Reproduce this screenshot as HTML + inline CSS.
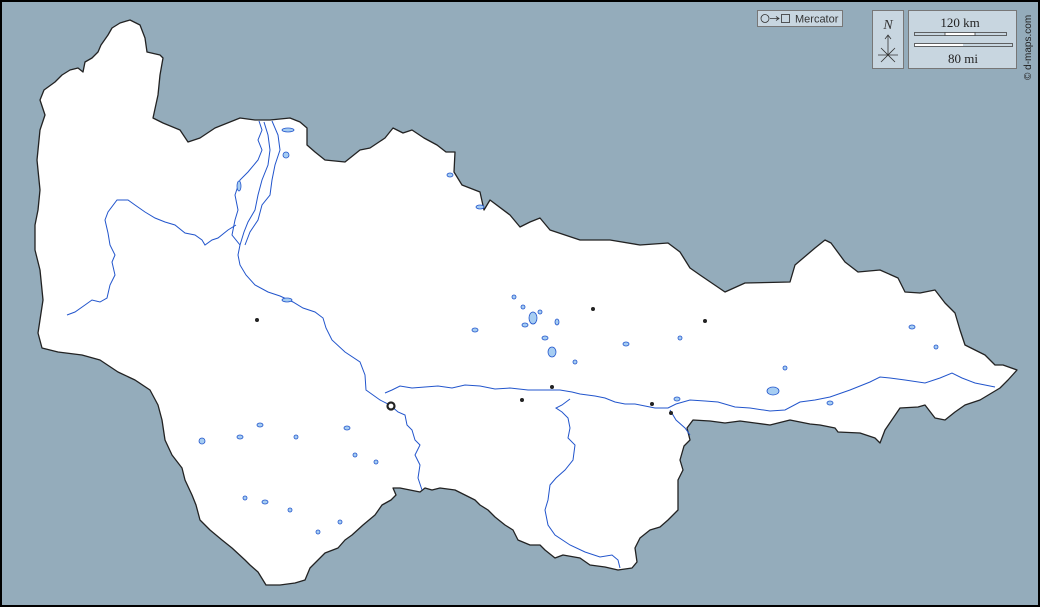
<!DOCTYPE html>
<html><head><meta charset="utf-8"><style>
html,body{margin:0;padding:0;background:#000}
#w{position:relative;width:1040px;height:607px;overflow:hidden}
svg{position:absolute;left:0;top:0}
.t{font-family:"Liberation Serif",serif}
</style></head><body><div id="w">
<svg width="1040" height="607" viewBox="0 0 1040 607">
<rect x="0" y="0" width="1040" height="607" fill="#000"/>
<rect x="2" y="2" width="1036" height="603" fill="#94acbb"/>
<path fill="#fff" stroke="#222" stroke-width="1.3" stroke-linejoin="round" d="M130,20 L140,25 L145,38 L147,52 L160,55 L163,58 L160,75 L158,95 L153,118 L163,123 L180,130 L188,142 L200,138 L215,128 L240,118 L255,120 L270,120 L290,118 L300,122 L307,128 L307,145 L315,152 L325,160 L345,162 L360,150 L370,148 L385,138 L393,128 L403,133 L412,130 L424,138 L437,145 L446,152 L455,152 L454,172 L462,185 L480,192 L484,210 L490,200 L510,215 L520,227 L530,222 L540,218 L550,230 L580,240 L610,240 L640,245 L668,243 L680,252 L690,268 L700,275 L725,292 L745,283 L790,282 L795,265 L815,248 L825,240 L831,243 L845,262 L858,272 L880,270 L898,278 L905,292 L920,293 L935,290 L945,303 L955,313 L960,330 L965,345 L985,355 L995,365 L1003,365 L1017,370 L1008,380 L1000,388 L980,400 L965,405 L955,412 L945,420 L935,418 L925,405 L918,407 L900,408 L885,430 L880,443 L875,438 L860,433 L838,432 L835,428 L820,425 L810,424 L790,420 L770,425 L755,423 L740,421 L725,423 L710,421 L693,420 L687,428 L690,440 L684,446 L680,460 L683,470 L678,480 L678,510 L668,520 L660,527 L650,530 L640,538 L635,548 L637,562 L632,568 L618,570 L605,567 L590,565 L580,558 L563,555 L555,558 L545,550 L540,545 L530,545 L518,540 L513,530 L505,525 L495,517 L488,510 L480,505 L475,500 L465,495 L455,490 L440,488 L432,490 L425,488 L420,492 L410,490 L400,488 L393,488 L396,495 L391,500 L382,505 L375,515 L363,525 L352,535 L345,540 L338,548 L325,553 L318,560 L310,568 L305,580 L295,583 L280,585 L266,585 L258,572 L250,565 L245,560 L232,548 L222,540 L210,530 L200,520 L196,505 L192,495 L185,480 L182,468 L172,455 L165,440 L162,420 L158,405 L150,390 L135,380 L118,372 L100,360 L82,355 L58,352 L42,348 L38,333 L43,300 L40,270 L35,250 L35,225 L38,210 L40,190 L37,160 L40,130 L45,115 L40,100 L44,90 L55,82 L62,75 L70,70 L78,68 L83,72 L85,62 L92,58 L98,52 L101,45 L108,35 L112,28 L120,23 Z"/>
<g fill="none" stroke="#2255cc" stroke-width="1">
<path d="M385,393 L392,390 L400,386 L412,388 L425,387 L438,386 L452,388 L465,385 L480,386 L495,389 L510,388 L528,390 L545,390 L560,390 L572,392 L580,394 L595,396 L605,398 L615,402 L625,404 L635,404 L645,406 L655,408 L668,408 L676,404 L690,400 L705,401 L718,402 L735,407 L750,408 L770,411 L785,410 L800,402 L815,400 L830,397 L850,390 L870,382 L880,377 L890,378 L905,380 L925,383 L940,378 L952,373 L962,378 L975,383 L995,387"/>
<path d="M259,121 L262,130 L258,140 L262,150 L258,160 L248,172 L240,180 L235,195 L238,210 L235,220 L232,235 L240,245 L238,255 L240,265 L246,275 L255,285 L268,292 L280,296 L293,302 L303,308 L315,312 L323,318 L326,328 L332,340 L345,352 L360,362 L365,375 L366,390 L380,400 L390,405 L398,412 L405,415 L407,425 L412,430 L415,440 L420,445 L415,455 L420,465 L418,478 L422,490"/>
<path d="M264,122 L268,135 L270,150 L268,165 L262,180 L258,195 L255,210 L248,222 L244,232 L240,245"/>
<path d="M272,121 L278,135 L280,150 L275,165 L272,180 L270,195 L262,205 L258,220 L250,232 L245,245"/>
<path d="M67,315 L75,312 L85,305 L92,300 L100,302 L107,298 L110,285 L115,275 L112,262 L115,255 L110,245 L108,233 L105,220 L108,212 L117,200 L128,200 L135,205 L145,212 L155,218 L165,222 L175,225 L185,233 L195,235 L202,240 L205,245 L212,240 L218,238 L228,230 L236,225"/>
<path d="M570,399 L562,405 L556,408 L562,412 L568,418 L570,428 L568,438 L575,445 L573,460 L565,470 L556,478 L550,485 L548,500 L545,510 L548,525 L555,535 L570,545 L585,552 L600,557 L612,555 L618,560 L620,568"/>
<path d="M670,410 L676,420 L685,428 L690,435"/>
</g>
<g fill="#a6cdf2" stroke="#2255cc" stroke-width="0.8">
<ellipse cx="287" cy="300" rx="5" ry="2"/><ellipse cx="533" cy="318" rx="4" ry="6"/><ellipse cx="552" cy="352" rx="4" ry="5"/>
<ellipse cx="773" cy="391" rx="6" ry="4"/><ellipse cx="912" cy="327" rx="3" ry="2"/><ellipse cx="202" cy="441" rx="3" ry="3"/>
<ellipse cx="240" cy="437" rx="3" ry="2"/><ellipse cx="265" cy="502" rx="3" ry="2"/><ellipse cx="347" cy="428" rx="3" ry="2"/>
<ellipse cx="626" cy="344" rx="3" ry="2"/><ellipse cx="680" cy="338" rx="2" ry="2"/><ellipse cx="830" cy="403" rx="3" ry="2"/>
<ellipse cx="480" cy="207" rx="4" ry="2"/><ellipse cx="288" cy="130" rx="6" ry="2"/><ellipse cx="286" cy="155" rx="3" ry="3"/>
<ellipse cx="239" cy="186" rx="2" ry="5"/><ellipse cx="450" cy="175" rx="3" ry="2"/><ellipse cx="525" cy="325" rx="3" ry="2"/>
<ellipse cx="545" cy="338" rx="3" ry="2"/><ellipse cx="557" cy="322" rx="2" ry="3"/><ellipse cx="475" cy="330" rx="3" ry="2"/>
<ellipse cx="677" cy="399" rx="3" ry="2"/><ellipse cx="785" cy="368" rx="2" ry="2"/><ellipse cx="936" cy="347" rx="2" ry="2"/>
<ellipse cx="355" cy="455" rx="2" ry="2"/><ellipse cx="376" cy="462" rx="2" ry="2"/><ellipse cx="245" cy="498" rx="2" ry="2"/>
<ellipse cx="290" cy="510" rx="2" ry="2"/><ellipse cx="318" cy="532" rx="2" ry="2"/><ellipse cx="340" cy="522" rx="2" ry="2"/>
<ellipse cx="260" cy="425" rx="3" ry="2"/><ellipse cx="296" cy="437" rx="2" ry="2"/><ellipse cx="514" cy="297" rx="2" ry="2"/>
<ellipse cx="523" cy="307" rx="2" ry="2"/><ellipse cx="540" cy="312" rx="2" ry="2"/><ellipse cx="575" cy="362" rx="2" ry="2"/>
</g>
<g fill="#222">
<circle cx="257" cy="320" r="2"/><circle cx="593" cy="309" r="2"/><circle cx="705" cy="321" r="2"/><circle cx="552" cy="387" r="2"/>
<circle cx="522" cy="400" r="2"/><circle cx="652" cy="404" r="2"/><circle cx="671" cy="413" r="2"/>
</g>
<circle cx="391" cy="406" r="3.5" fill="#fff" stroke="#222" stroke-width="2.2"/>
<rect x="757.5" y="10.5" width="85" height="16" fill="#c8d6e0" stroke="#777"/>
<circle cx="765" cy="18.5" r="4" fill="none" stroke="#333" stroke-width="0.8"/>
<path d="M770,18.5 H779 M776,16.5 L779,18.5 L776,20.5" stroke="#333" stroke-width="0.8" fill="none"/>
<rect x="781.5" y="14.5" width="8" height="8" fill="none" stroke="#333" stroke-width="0.8"/>
<text x="795" y="22.5" font-family="Liberation Sans,sans-serif" font-size="11" fill="#333">Mercator</text>
<rect x="872.5" y="10.5" width="31" height="58" fill="#c8d6e0" stroke="#777"/>
<text x="888" y="29" text-anchor="middle" class="t" font-style="italic" font-size="14" fill="#333">N</text>
<path d="M888,55 V35 M885,39 L888,35 L891,39 M878,55 H898 M881,48 L895,62 M895,48 L881,62" stroke="#333" stroke-width="0.8" fill="none"/>
<rect x="908.5" y="10.5" width="108" height="58" fill="#c8d6e0" stroke="#777"/>
<text x="960" y="27" text-anchor="middle" class="t" font-size="13" fill="#222">120 km</text>
<text x="963" y="63" text-anchor="middle" class="t" font-size="13" fill="#222">80 mi</text>
<rect x="914.5" y="32.5" width="92" height="3" fill="#c8d6e0" stroke="#444" stroke-width="0.8"/>
<rect x="945" y="33" width="30" height="2" fill="#fff"/>
<path d="M945,32 V36 M975,32 V36" stroke="#444" stroke-width="0.8"/>
<rect x="914.5" y="43.5" width="98" height="3" fill="#c8d6e0" stroke="#444" stroke-width="0.8"/>
<rect x="915" y="44" width="48" height="2" fill="#fff"/>
<text x="1031" y="80" transform="rotate(-90 1031 80)" font-family="Liberation Sans,sans-serif" font-size="10" fill="#222">© d-maps.com</text>
</svg></div></body></html>
